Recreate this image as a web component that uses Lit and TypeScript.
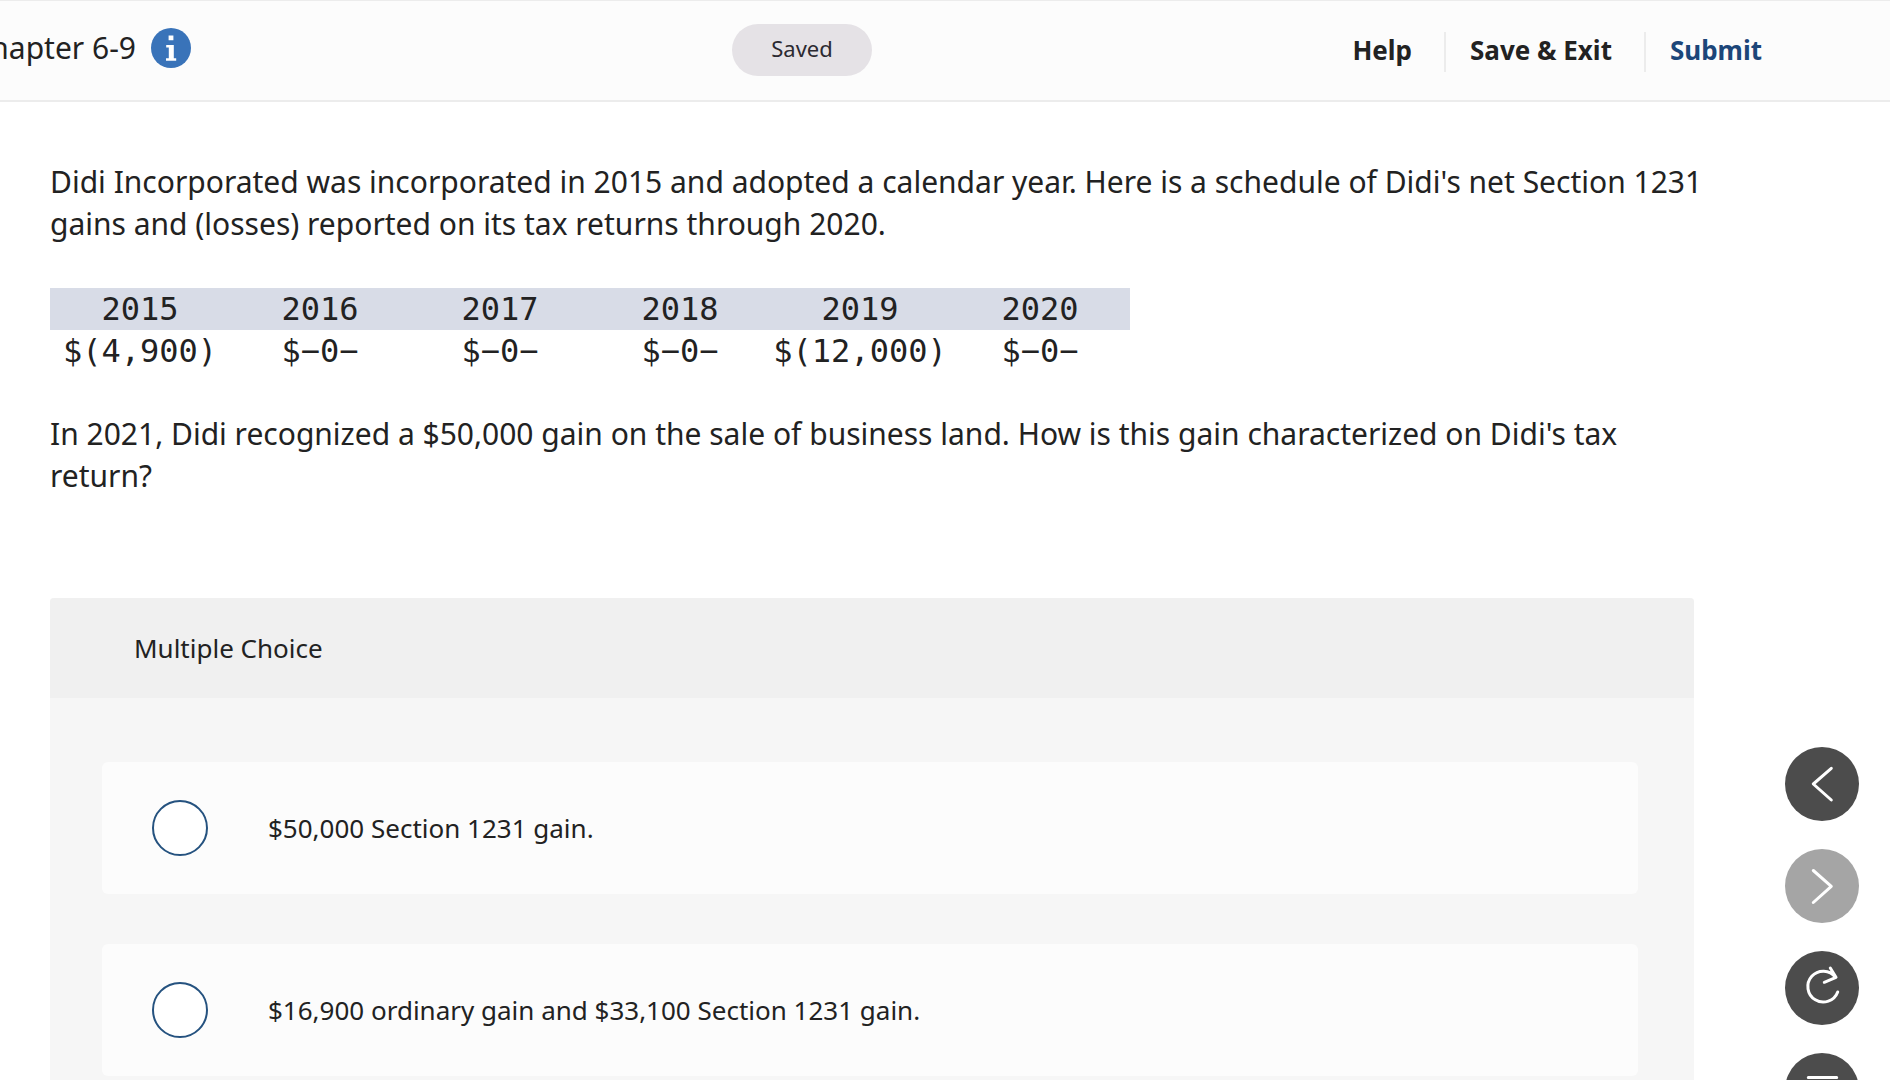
import { LitElement, html, css, svg } from "lit";
import { customElement, property, state } from "lit/decorators.js";

const SCHEDULE = [
  { year: "2015", amount: "$(4,900)" },
  { year: "2016", amount: "$−0−" },
  { year: "2017", amount: "$−0−" },
  { year: "2018", amount: "$−0−" },
  { year: "2019", amount: "$(12,000)" },
  { year: "2020", amount: "$−0−" },
];

const CHOICES = [
  "$50,000 Section 1231 gain.",
  "$16,900 ordinary gain and $33,100 Section 1231 gain.",
];

@customElement("exam-header")
class ExamHeader extends LitElement {
  static styles = css`
    :host {
      display: block;
    }
    .bar {
      box-sizing: border-box;
      display: grid;
      grid-template-columns: 732px auto 1fr;
      align-items: center;
      height: 102px;
      padding-bottom: 1px;
      background: #fcfcfc;
      border-top: 1px solid #ececec;
      border-bottom: 2px solid #ececec;
    }
    .heading {
      display: flex;
      align-items: center;
      justify-content: flex-end;
      gap: 15px;
      width: 191px;
      overflow: hidden;
      padding-bottom: 4px;
    }
    .title {
      margin: 0;
      font-size: 30px;
      font-weight: 400;
      line-height: 40px;
      white-space: nowrap;
    }
    .info {
      flex: none;
      width: 40px;
      height: 40px;
      padding: 0;
      border: 0;
      background: none;
    }
    .info svg {
      display: block;
    }
    .status {
      box-sizing: border-box;
      width: 140px;
      height: 52px;
      padding-bottom: 4px;
      border-radius: 26px;
      background: #e5e2e6;
      color: #2c2a31;
      font-size: 22px;
      line-height: 48px;
      text-align: center;
    }
    .actions {
      display: flex;
      align-items: center;
      justify-content: flex-end;
      padding: 4px 96px 0 0;
    }
    .action {
      padding: 0 32px 4px 24px;
      border: 0;
      border-left: 2px solid #ececec;
      background: none;
      color: #222;
      font: inherit;
      font-size: 26px;
      font-weight: 700;
      line-height: 36px;
      white-space: nowrap;
    }
    .action:first-child {
      border-left: 0;
    }
    .primary {
      color: #1c4679;
    }
  `;

  render() {
    return html`
      <header class="bar">
        <div class="heading">
          <h1 class="title">Chapter 6-9</h1>
          <button class="info" aria-label="Assignment information">
            <svg width="40" height="40" viewBox="0 0 40 40">
              <circle cx="20" cy="20" r="20" fill="#3973b9" />
              <path
                d="M17.6 7.6h4.8v4.6h-4.8zM15.2 17h7.6v13.2h2.4v2.6H15v-2.6h2.8V19.6h-2.6z"
                fill="#fff"
              />
            </svg>
          </button>
        </div>
        <div class="status" role="status">Saved</div>
        <nav class="actions">
          <button class="action">Help</button>
          <button class="action">Save &amp; Exit</button>
          <button class="action primary">Submit</button>
        </nav>
      </header>
    `;
  }
}

@customElement("loss-schedule")
class LossSchedule extends LitElement {
  static styles = css`
    :host {
      display: block;
    }
    .schedule {
      border-collapse: collapse;
      table-layout: fixed;
      width: 1080px;
      max-width: 100%;
      font: 32px/42px "DejaVu Sans Mono", monospace;
      text-align: center;
    }
    .year {
      padding: 0;
      background: #d8dce7;
      font-weight: 400;
    }
    .amount {
      padding: 0;
    }
  `;

  render() {
    return html`
      <table class="schedule">
        <thead>
          <tr>
            ${SCHEDULE.map((s) => html`<th class="year" scope="col">${s.year}</th>`)}
          </tr>
        </thead>
        <tbody>
          <tr>
            ${SCHEDULE.map((s) => html`<td class="amount">${s.amount}</td>`)}
          </tr>
        </tbody>
      </table>
    `;
  }
}

@customElement("multiple-choice")
class MultipleChoice extends LitElement {
  @property({ attribute: false }) choices: string[] = [];
  @state() private picked = -1;

  static styles = css`
    :host {
      display: block;
    }
    .panel {
      min-width: 0;
      margin: 0;
      border-radius: 4px;
      background: #f6f6f6;
      font-size: 26px;
      overflow: hidden;
    }
    .head {
      margin: 0;
      padding: 0 84px;
      background: #f0f0f0;
      font-size: inherit;
      font-weight: 400;
      line-height: 100px;
    }
    .list {
      display: flex;
      flex-direction: column;
      gap: 50px;
      padding: 64px 56px 64px 52px;
    }
    .choice {
      display: flex;
      align-items: center;
      gap: 60px;
      min-height: 132px;
      padding: 0 50px;
      border-radius: 6px;
      background: #fcfcfc;
    }
    .radio {
      appearance: none;
      flex: none;
      width: 56px;
      height: 56px;
      margin: 0;
      border: 2px solid #25527f;
      border-radius: 50%;
      background: #fff;
    }
    .radio:checked {
      background: radial-gradient(#25527f 50%, #fff 54%);
    }
  `;

  render() {
    return html`
      <section class="panel" role="radiogroup" aria-labelledby="kind">
        <h2 class="head" id="kind">Multiple Choice</h2>
        <div class="list">
          ${this.choices.map(
            (text, i) => html`
              <label class="choice">
                <input
                  class="radio"
                  type="radio"
                  name="answer"
                  .checked=${this.picked === i}
                  @change=${() => (this.picked = i)}
                />
                <span>${text}</span>
              </label>
            `
          )}
        </div>
      </section>
    `;
  }
}

@customElement("question-tools")
class QuestionTools extends LitElement {
  static styles = css`
    :host {
      display: block;
    }
    .tools {
      display: flex;
      flex-direction: column;
      gap: 28px;
    }
    .tool {
      width: 74px;
      height: 74px;
      padding: 0;
      border: 0;
      border-radius: 50%;
      background: #4c4c4c;
    }
    .tool:disabled {
      background: #a5a5a5;
    }
    .icon {
      display: block;
      fill: none;
      stroke: #fff;
      stroke-width: 3;
      stroke-linecap: round;
      stroke-linejoin: round;
    }
  `;

  private tool(label: string, shape: unknown, disabled = false) {
    return html`
      <button class="tool" aria-label=${label} ?disabled=${disabled}>
        <svg class="icon" width="74" height="74" viewBox="0 0 74 74">${shape}</svg>
      </button>
    `;
  }

  render() {
    return html`
      <nav class="tools" aria-label="Question tools">
        ${this.tool("Previous question", svg`<path d="M46.3 21.3 28.3 37l18 16" />`)}
        ${this.tool("Next question", svg`<path d="M28.3 21.5 46.3 37.3l-18 16.2" />`, true)}
        ${this.tool(
          "Reset answer",
          svg`<path d="M50.5 26.3A15.4 15.4 0 1 0 52.7 41M45.3 17 51 26.3 39.3 31.3" />`
        )}
        ${this.tool("Question list", svg`<path d="M23.3 24.5h28.4M23.3 37h28.4M23.3 49.5h28.4" />`)}
      </nav>
    `;
  }
}

@customElement("app-root")
class AppRoot extends LitElement {
  static styles = css`
    :host {
      display: block;
      height: 100vh;
      overflow: hidden;
      background: #fff;
      color: #222;
      font-family: "Noto Sans", sans-serif;
    }
    .page {
      display: flex;
      align-items: flex-start;
      padding: 0 31px 0 50px;
    }
    .question {
      flex: 1;
      min-width: 0;
      padding-top: 59px;
    }
    .text {
      margin: 0;
      font-size: 30px;
      line-height: 42px;
    }
    .schedule {
      margin: 43px 0 41px;
    }
    .answers {
      margin: 101px 12px 0 0;
    }
    .side {
      margin: 645px 0 0 79px;
    }
  `;

  render() {
    return html`
      <exam-header></exam-header>
      <div class="page">
        <main class="question">
          <p class="text">
            Didi Incorporated was incorporated in 2015 and adopted a calendar year. Here is a
            schedule of Didi's net Section 1231 gains and (losses) reported on its tax returns
            through 2020.
          </p>
          <loss-schedule class="schedule"></loss-schedule>
          <p class="text">
            In 2021, Didi recognized a $50,000 gain on the sale of business land. How is this gain
            characterized on Didi's tax return?
          </p>
          <multiple-choice class="answers" .choices=${CHOICES}></multiple-choice>
        </main>
        <question-tools class="side"></question-tools>
      </div>
    `;
  }
}
